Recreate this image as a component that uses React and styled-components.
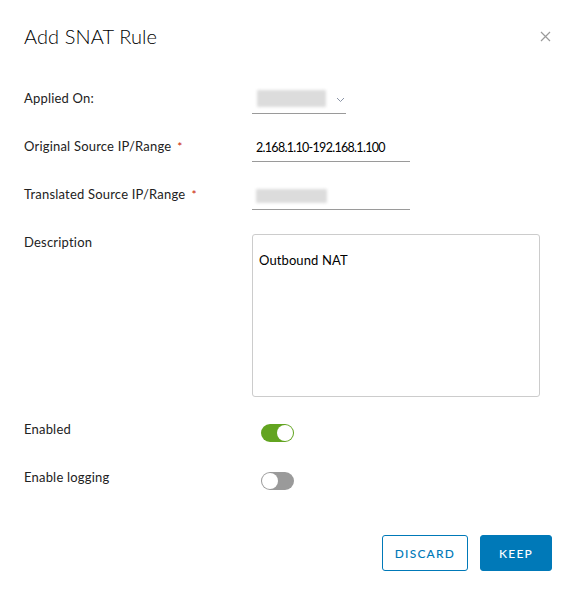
import styled, { createGlobalStyle } from 'styled-components';

const GlobalStyle = createGlobalStyle`
  html, body {
    margin: 0;
    padding: 0;
    background: #ffffff;
  }
  body {
    font-family: Lato, "Open Sans", sans-serif;
    color: #222222;
  }
`;

const Dialog = styled.div`
  box-sizing: border-box;
  width: 576px;
  height: 595px;
  padding: 22px 24px 24px 24px;
  background: #ffffff;
  border-radius: 3px;
  display: flex;
  flex-direction: column;
`;

const Header = styled.div`
  display: flex;
  align-items: center;
  justify-content: space-between;
  height: 28px;
`;

const Title = styled.h2`
  margin: 0;
  font-size: 20px;
  font-weight: 300;
  line-height: 28px;
  letter-spacing: 0.1px;
  color: #000000;
`;

const CloseButton = styled.button`
  border: 0;
  background: none;
  padding: 0;
  width: 20px;
  height: 20px;
  margin-right: -3px;
  display: flex;
  align-items: center;
  justify-content: center;
  cursor: pointer;
`;

const Form = styled.div`
  margin-top: 36px;
  display: flex;
  flex-direction: column;
  gap: 20px;
`;

const Row = styled.div`
  display: grid;
  grid-template-columns: 228px 1fr;
  align-items: start;
  min-height: 28px;
`;

const Label = styled.label`
  font-size: 13px;
  line-height: 24px;
  letter-spacing: 0.2px;
  color: #222222;
  .req {
    color: #c92100;
    margin-left: 6px;
    font-size: 12px;
  }
`;

const Underlined = styled.div`
  box-sizing: border-box;
  width: ${p => p.$width}px;
  height: 28px;
  border-bottom: 1px solid #9a9a9a;
  display: flex;
  align-items: center;
  gap: 10px;
  padding: 0 0 0 ${p => p.$pad}px;
  font-size: 12.5px;
  letter-spacing: -0.7px;
  color: #000000;
`;

const Redacted = styled.div`
  width: ${p => p.$w}px;
  height: ${p => p.$h}px;
  margin-top: ${p => p.$top || 0}px;
  background: #dcdcdc;
  filter: blur(1.5px);
  border-radius: 1px;
`;

const TextArea = styled.div`
  box-sizing: border-box;
  margin-top: 4px;
  width: 288px;
  height: 163px;
  border: 1px solid #cccccc;
  border-radius: 3px;
  padding: 16px 6px;
  font-size: 13px;
  line-height: 18px;
  letter-spacing: 0.1px;
  color: #000000;
`;

const Toggle = styled.span`
  box-sizing: border-box;
  margin: 7px 0 0 9px;
  width: 33px;
  height: 18px;
  border-radius: 9px;
  background: ${p => (p.$on ? '#62a420' : '#9a9a9a')};
  display: flex;
  align-items: center;
  justify-content: ${p => (p.$on ? 'flex-end' : 'flex-start')};
  padding: 1px;
  &::after {
    content: '';
    display: block;
    width: 16px;
    height: 16px;
    border-radius: 50%;
    background: #ffffff;
  }
`;

const Footer = styled.div`
  margin-top: auto;
  display: flex;
  justify-content: flex-end;
  gap: 12px;
`;

const Button = styled.button`
  box-sizing: border-box;
  height: 36px;
  padding: 0 ${p => p.$pad}px;
  border-radius: 3px;
  border: 1px solid #0079b8;
  background: ${p => (p.$primary ? '#0079b8' : '#ffffff')};
  color: ${p => (p.$primary ? '#ffffff' : '#0079b8')};
  font-family: Lato, "Open Sans", sans-serif;
  font-size: 12px;
  font-weight: 500;
  letter-spacing: 0.1em;
  cursor: pointer;
`;

const Chevron = () => (
  <svg width="9" height="6" viewBox="0 0 9 6">
    <path d="M1 1 L4.5 4.5 L8 1" fill="none" stroke="#8a94a6" strokeWidth="1" />
  </svg>
);

export default function App() {
  return (
    <>
      <GlobalStyle />
      <Dialog>
        <Header>
          <Title>Add SNAT Rule</Title>
          <CloseButton aria-label="Close">
            <svg width="11" height="11" viewBox="0 0 11 11">
              <path d="M1 1 L10 10 M10 1 L1 10" stroke="#9a9a9a" strokeWidth="1.2" />
            </svg>
          </CloseButton>
        </Header>
        <Form>
          <Row>
            <Label>Applied On:</Label>
            <Underlined $width={94} $pad={5}>
              <Redacted $w={69} $h={17} $top={-2} />
              <Chevron />
            </Underlined>
          </Row>
          <Row>
            <Label>Original Source IP/Range<span className="req">*</span></Label>
            <Underlined $width={158} $pad={4}>2.168.1.10-192.168.1.100</Underlined>
          </Row>
          <Row>
            <Label>Translated Source IP/Range<span className="req">*</span></Label>
            <Underlined $width={158} $pad={4}>
              <Redacted $w={71} $h={14} $top={1} />
            </Underlined>
          </Row>
          <Row>
            <Label>Description</Label>
            <TextArea>Outbound NAT</TextArea>
          </Row>
          <Row>
            <Label>Enabled</Label>
            <Toggle $on />
          </Row>
          <Row>
            <Label>Enable logging</Label>
            <Toggle />
          </Row>
        </Form>
        <Footer>
          <Button $pad={12}>DISCARD</Button>
          <Button $primary $pad={18}>KEEP</Button>
        </Footer>
      </Dialog>
    </>
  );
}
